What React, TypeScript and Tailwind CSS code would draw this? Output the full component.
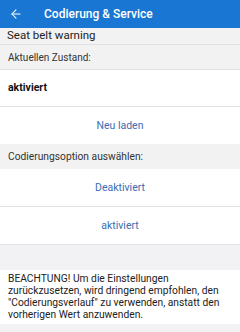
import { ArrowLeft } from 'lucide-react';

function Divider() {
  return <div className="h-px bg-[#e2e2e6]" />;
}

function ActionRow({ label }: { label: string }) {
  return (
    <button className="flex h-[37px] w-full items-center justify-center bg-white text-[10.5px] text-[#3b6db4]">
      {label}
    </button>
  );
}

export default function App() {
  return (
    <div
      className="flex h-[332px] w-[240px] flex-col overflow-hidden bg-[#f2f2f4] text-[#222]"
      style={{ fontFamily: 'Roboto, "Noto Sans", sans-serif' }}
    >
      {/* Toolbar */}
      <div className="flex h-[28px] items-center bg-[#1976d2] text-white">
        <ArrowLeft className="ml-[9px] h-[14px] w-[14px]" strokeWidth={1.8} />
        <span className="ml-[21px] text-[12px] font-medium">Codierung &amp; Service</span>
      </div>

      <div className="flex h-[16px] items-center bg-[#f2f2f2] px-[7px] text-[11.5px] text-[#222]">
        Seat belt warning
      </div>
      <Divider />
      <div className="flex h-[24px] items-center bg-[#f2f2f2] px-[8px] text-[10px] text-[#333]">
        Aktuellen Zustand:
      </div>
      <Divider />

      <div className="flex h-[36px] items-center bg-white px-[8px] text-[10.5px] font-bold text-[#111]">
        aktiviert
      </div>
      <Divider />
      <ActionRow label="Neu laden" />

      <div className="flex h-[25px] items-center bg-[#f2f2f2] px-[8px] text-[10.25px] text-[#333]">
        Codierungsoption auswählen:
      </div>
      <ActionRow label="Deaktiviert" />
      <Divider />
      <ActionRow label="aktiviert" />
      <Divider />

      <div className="h-[25px]" />

      <div className="bg-white px-[8px] py-[3px] text-[10.25px] leading-[12px] text-[#222]">
        BEACHTUNG! Um die Einstellungen zurückzusetzen, wird dringend empfohlen, den "Codierungsverlauf" zu verwenden, anstatt den vorherigen Wert anzuwenden.
      </div>
    </div>
  );
}
